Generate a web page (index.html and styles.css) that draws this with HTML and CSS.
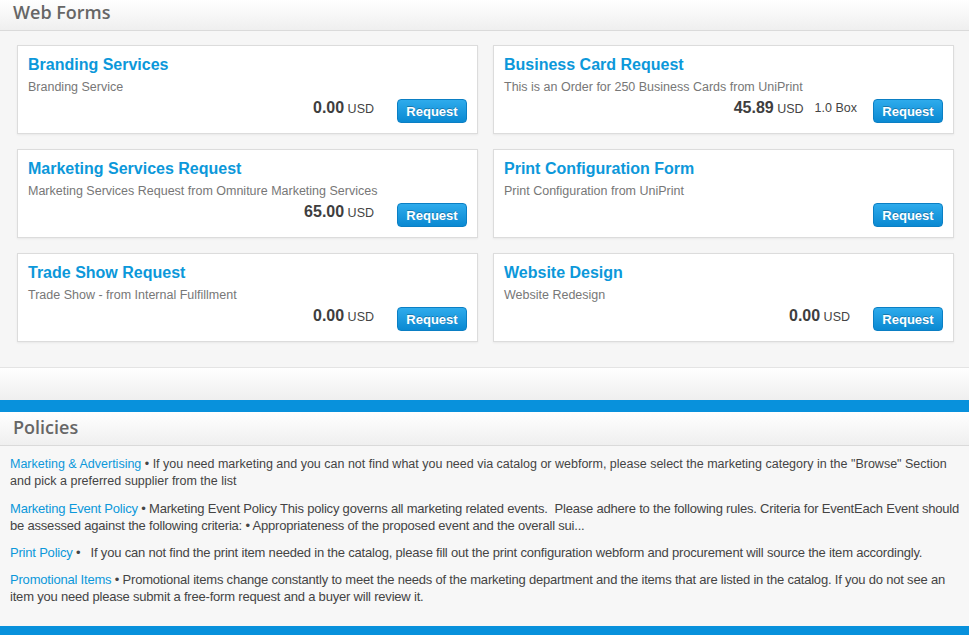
FILE: index.html
```html
<!DOCTYPE html>
<html lang="en">
<head>
    <meta charset="UTF-8">
    <meta name="viewport" content="width=device-width, initial-scale=1.0">
    <title>Web Forms</title>
    <link rel="stylesheet" href="styles.css">
</head>
<body>
    <div class="section-head">
        <h2>Web Forms</h2>
    </div>
    <div class="forms">
        <div class="card">
            <a class="card-title" href="#">Branding Services</a>
            <p class="card-desc">Branding Service</p>
            <div class="card-foot">
                <span class="amount"><b>0.00</b> USD</span>
                <button class="btn">Request</button>
            </div>
        </div>
        <div class="card">
            <a class="card-title" href="#">Business Card Request</a>
            <p class="card-desc">This is an Order for 250 Business Cards from UniPrint</p>
            <div class="card-foot">
                <span class="amount"><b>45.89</b> USD</span>
                <span class="unit">1.0 Box</span>
                <button class="btn">Request</button>
            </div>
        </div>
        <div class="card">
            <a class="card-title" href="#">Marketing Services Request</a>
            <p class="card-desc">Marketing Services Request from Omniture Marketing Services</p>
            <div class="card-foot">
                <span class="amount"><b>65.00</b> USD</span>
                <button class="btn">Request</button>
            </div>
        </div>
        <div class="card">
            <a class="card-title" href="#">Print Configuration Form</a>
            <p class="card-desc">Print Configuration from UniPrint</p>
            <div class="card-foot">
                <button class="btn">Request</button>
            </div>
        </div>
        <div class="card">
            <a class="card-title" href="#">Trade Show Request</a>
            <p class="card-desc">Trade Show - from Internal Fulfillment</p>
            <div class="card-foot">
                <span class="amount"><b>0.00</b> USD</span>
                <button class="btn">Request</button>
            </div>
        </div>
        <div class="card">
            <a class="card-title" href="#">Website Design</a>
            <p class="card-desc">Website Redesign</p>
            <div class="card-foot">
                <span class="amount"><b>0.00</b> USD</span>
                <button class="btn">Request</button>
            </div>
        </div>
    </div>

    <div class="spacer"></div>
    <div class="blue-bar"></div>

    <div class="section-head policies-head">
        <h2>Policies</h2>
    </div>
    <div class="policies">
        <p><a href="#">Marketing &amp; Advertising</a> &bull; If you need marketing and you can not find what you need via catalog or webform, please select the marketing category in the "Browse" Section and pick a preferred supplier from the list</p>
        <p class="narrow"><a href="#">Marketing Event Policy</a> &bull; Marketing Event Policy This policy governs all marketing related events.&nbsp; Please adhere to the following rules. Criteria for EventEach Event should be assessed against the following criteria: &bull; Appropriateness of the proposed event and the overall sui...</p>
        <p class="narrow"><a href="#">Print Policy</a> &bull; &nbsp; If you can not find the print item needed in the catalog, please fill out the print configuration webform and procurement will source the item accordingly.</p>
        <p class="narrow"><a href="#">Promotional Items</a> &bull; Promotional items change constantly to meet the needs of the marketing department and the items that are listed in the catalog. If you do not see an item you need please submit a free-form request and a buyer will review it.</p>
    </div>
    <div class="blue-bar"></div>
</body>
</html>
```

FILE: styles.css
```css
body {
    margin: 0;
    font-family: "Liberation Sans", Arial, sans-serif;
    background-color: #f6f6f6;
    overflow: hidden;
}
.section-head {
    height: 30px;
    background: linear-gradient(#ffffff, #efefef);
    border-bottom: 1px solid #dadada;
}
.section-head h2 {
    margin: 0;
    padding-left: 13px;
    font-family: "Open Sans", sans-serif;
    font-size: 18px;
    font-weight: 600;
    line-height: 25px;
    color: #666;
}
.forms {
    display: grid;
    grid-template-columns: 461px 461px;
    column-gap: 15px;
    row-gap: 15px;
    padding: 14px 15px 25px 17px;
    border-bottom: 1px solid #e4e4e4;
}
.card {
    display: flex;
    flex-direction: column;
    height: 89px;
    box-sizing: border-box;
    padding: 9px 10px 10px 10px;
    background-color: #fff;
    border: 1px solid #dcdcdc;
    box-shadow: 0 1px 2px rgba(0, 0, 0, 0.06);
}
.card-title {
    font-size: 16px;
    font-weight: bold;
    line-height: 20px;
    color: #0c98da;
    text-decoration: none;
}
.card-desc {
    margin: 4px 0 0 0;
    font-size: 12.5px;
    line-height: 16px;
    color: #777;
}
.card-foot {
    display: flex;
    align-items: center;
    justify-content: flex-end;
    margin-top: auto;
}
.amount {
    font-size: 12.5px;
    color: #444;
    margin-right: 23px;
    margin-bottom: 6px;
}
.amount b {
    font-size: 16px;
    color: #3e3e3e;
}
.unit {
    font-size: 12.5px;
    color: #444;
    margin-left: -12px;
    margin-right: 16px;
    margin-bottom: 6px;
}
.btn {
    width: 70px;
    height: 24px;
    padding: 0;
    border: 1px solid #0b7fc4;
    border-radius: 4px;
    background: linear-gradient(#2eabec, #0a89d2);
    color: #fff;
    font-family: "Liberation Sans", Arial, sans-serif;
    font-size: 13px;
    font-weight: bold;
    text-shadow: 0 -1px 0 rgba(0, 0, 0, 0.25);
}
.spacer {
    height: 32px;
    background: linear-gradient(#ffffff, #efefef);
}
.blue-bar {
    height: 12px;
    background-color: #0891dc;
}
.policies-head {
    height: 33px;
}
.policies-head h2 {
    line-height: 31px;
}
.policies {
    padding: 10px 10px 11px 10px;
    background-color: #f7f7f7;
}
.policies p {
    margin: 0 0 10px 0;
    font-size: 12.5px;
    line-height: 17px;
    color: #444;
}
.policies a {
    color: #0c98da;
    text-decoration: none;
}
.policies .narrow {
    font-size: 13px;
    letter-spacing: -0.2px;
}
```
